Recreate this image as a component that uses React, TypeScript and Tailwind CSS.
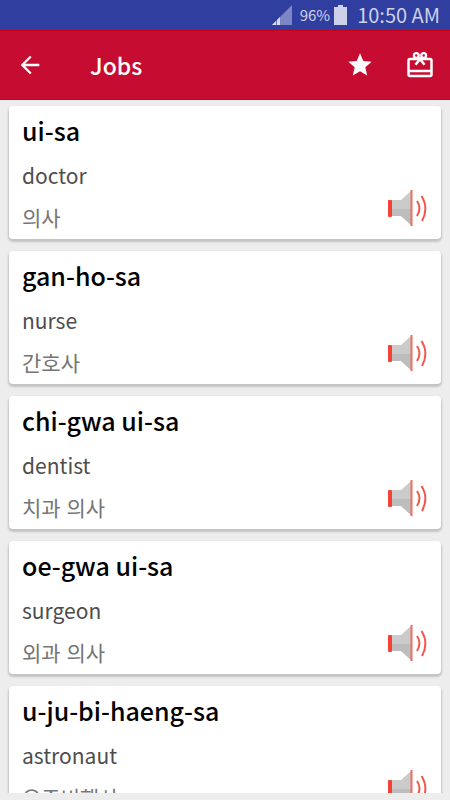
import { MdArrowBack, MdStar } from "react-icons/md";

type Word = { romanized: string; english: string; korean: string };

const words: Word[] = [
  { romanized: "ui-sa", english: "doctor", korean: "의사" },
  { romanized: "gan-ho-sa", english: "nurse", korean: "간호사" },
  { romanized: "chi-gwa ui-sa", english: "dentist", korean: "치과 의사" },
  { romanized: "oe-gwa ui-sa", english: "surgeon", korean: "외과 의사" },
  { romanized: "u-ju-bi-haeng-sa", english: "astronaut", korean: "우주비행사" },
];

function StatusBar() {
  return (
    <div className="flex h-[30px] shrink-0 items-center justify-end bg-[#303f9f] pr-2.5 text-[#cdd1ea]">
      <svg className="mr-2 h-5 w-5" viewBox="0 0 20 20" aria-hidden="true">
        <path d="M0 20L20 0V20Z" fill="#7d86c4" />
        <path d="M0 20L9 11V20Z" fill="#d8dbef" />
        <path d="M4.500 15V20M8.500 11V20" stroke="#303f9f" strokeWidth="0.600" />
      </svg>
      <span className="mr-1 text-[15px]">96%</span>
      <svg className="mr-2.5 h-5 w-[13px]" viewBox="0 0 13 20" aria-hidden="true">
        <path d="M4 0H9V2H13V20H0V2H4Z" fill="#cdd1ea" />
      </svg>
      <span className="text-xl">10:50 AM</span>
    </div>
  );
}

function SpeakerIcon() {
  return (
    <svg className="h-[38px] w-10" viewBox="0 0 40 38" aria-hidden="true">
      <path d="M3 11H13L23 2V36L13 27H3Z" fill="#cbcbcb" />
      <path d="M3 20H23V36L13 27H3Z" fill="#bdbdbd" />
      <rect x="0" y="11" width="4" height="17" rx="1" fill="#f44336" />
      <rect x="22.500" y="1" width="2" height="36" fill="#f26c63" />
      <path d="M29 12Q34 19 29 27" fill="none" stroke="#f2564b" strokeWidth="2" />
      <path d="M33.500 7Q41 19 34 32" fill="none" stroke="#f2564b" strokeWidth="2" />
    </svg>
  );
}

function WordCard({ word }: { word: Word }) {
  return (
    <li className="flex shrink-0 items-end justify-between rounded-[4px] bg-white px-[13px] py-2 shadow-[0_2px_2px_1px_#c4c4c4]">
      <div className="min-w-0">
        <h2 className="text-[25px] leading-8 font-medium text-black">{word.romanized}</h2>
        <p className="mt-[15px] text-[21px] leading-7 text-[#4d4d4d]">{word.english}</p>
        <p className="mt-3.5 text-[21px] leading-7 text-[#757575]" lang="ko">{word.korean}</p>
      </div>
      <button type="button" aria-label={`Play ${word.romanized}`} className="mb-1">
        <SpeakerIcon />
      </button>
    </li>
  );
}

export default function App() {
  return (
    <div className="flex h-screen flex-col overflow-hidden bg-[#ededed] font-['Noto_Sans_CJK_KR','Noto_Sans',sans-serif]">
      <StatusBar />
      <header className="flex h-[70px] shrink-0 items-center border-y border-[#cc0014] bg-[#c60c30] px-4 text-white">
        <button type="button" aria-label="Back">
          <MdArrowBack className="h-7 w-7" />
        </button>
        <h1 className="ml-[46px] flex-1 text-[23px] leading-8 font-medium">Jobs</h1>
        <button type="button" aria-label="Favorites" className="mr-8">
          <MdStar className="h-7 w-7" />
        </button>
        <button type="button" aria-label="Gifts">
          <svg className="h-7 w-7" viewBox="0 0 28 28" fill="none" stroke="currentColor" aria-hidden="true">
            <rect x="2.500" y="8" width="23" height="17" rx="1.500" strokeWidth="2.500" />
            <path d="M2.500 20H25.500" strokeWidth="2.500" />
            <circle cx="10.300" cy="4.600" r="2.400" strokeWidth="2.300" />
            <circle cx="17.700" cy="4.600" r="2.400" strokeWidth="2.300" />
            <path d="M12 6L14 8.500L16 6M14 8L9.500 13.800M14 8L18.500 13.800" strokeWidth="2.500" />
          </svg>
        </button>
      </header>
      <main className="min-h-0 flex-1 px-[9px] pb-[7px]">
        <ul className="-mx-1 flex h-full flex-col gap-3 overflow-hidden px-1 pt-1.5">
          {words.map((word) => (
            <WordCard key={word.romanized} word={word} />
          ))}
        </ul>
      </main>
    </div>
  );
}
